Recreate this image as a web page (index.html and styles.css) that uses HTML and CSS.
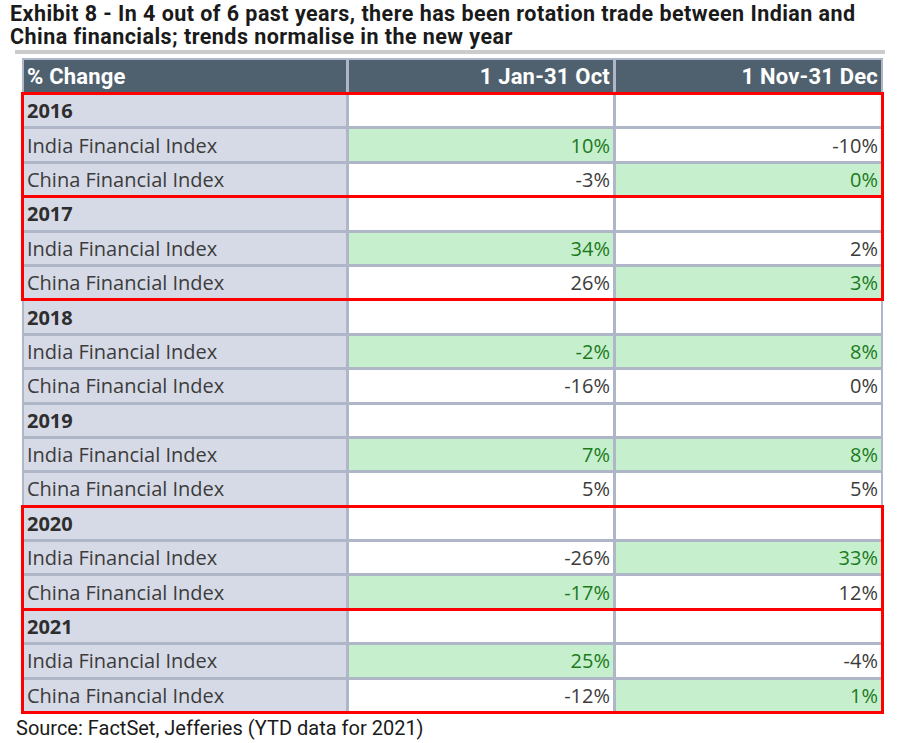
FILE: index.html
```html
<!DOCTYPE html>
<html>
<head>
<meta charset="utf-8">
<link rel="stylesheet" href="styles.css">
</head>
<body>
<div class="page">
  <h1 class="title"><span class="tl">Exhibit 8 - In 4 out of 6 past years, there has been rotation trade between Indian and</span><span class="tl">China financials; trends normalise in the new year</span></h1>
  <div class="rule"></div>
  <div class="table">
    <div class="row head">
      <div class="c lab">% Change</div>
      <div class="c num">1 Jan-31 Oct</div>
      <div class="c num">1 Nov-31 Dec</div>
    </div>
    <div class="group hl">
      <div class="row"><div class="c lab year">2016</div><div class="c"></div><div class="c"></div></div>
      <div class="row"><div class="c lab">India Financial Index</div><div class="c num g">10%</div><div class="c num">-10%</div></div>
      <div class="row"><div class="c lab">China Financial Index</div><div class="c num">-3%</div><div class="c num g">0%</div></div>
    </div>
    <div class="group hl">
      <div class="row"><div class="c lab year">2017</div><div class="c"></div><div class="c"></div></div>
      <div class="row"><div class="c lab">India Financial Index</div><div class="c num g">34%</div><div class="c num">2%</div></div>
      <div class="row"><div class="c lab">China Financial Index</div><div class="c num">26%</div><div class="c num g">3%</div></div>
    </div>
    <div class="group">
      <div class="row"><div class="c lab year">2018</div><div class="c"></div><div class="c"></div></div>
      <div class="row"><div class="c lab">India Financial Index</div><div class="c num g">-2%</div><div class="c num g">8%</div></div>
      <div class="row"><div class="c lab">China Financial Index</div><div class="c num">-16%</div><div class="c num">0%</div></div>
    </div>
    <div class="group">
      <div class="row"><div class="c lab year">2019</div><div class="c"></div><div class="c"></div></div>
      <div class="row"><div class="c lab">India Financial Index</div><div class="c num g">7%</div><div class="c num g">8%</div></div>
      <div class="row"><div class="c lab">China Financial Index</div><div class="c num">5%</div><div class="c num">5%</div></div>
    </div>
    <div class="group hl">
      <div class="row"><div class="c lab year">2020</div><div class="c"></div><div class="c"></div></div>
      <div class="row"><div class="c lab">India Financial Index</div><div class="c num">-26%</div><div class="c num g">33%</div></div>
      <div class="row"><div class="c lab">China Financial Index</div><div class="c num g">-17%</div><div class="c num">12%</div></div>
    </div>
    <div class="group hl">
      <div class="row"><div class="c lab year">2021</div><div class="c"></div><div class="c"></div></div>
      <div class="row"><div class="c lab">India Financial Index</div><div class="c num g">25%</div><div class="c num">-4%</div></div>
      <div class="row"><div class="c lab">China Financial Index</div><div class="c num">-12%</div><div class="c num g">1%</div></div>
    </div>
  </div>
  <p class="source">Source: FactSet, Jefferies (YTD data for 2021)</p>
</div>
</body>
</html>
```

FILE: styles.css
```css
html, body {
  margin: 0;
  padding: 0;
  background: #ffffff;
}
.page {
  padding: 2px 0 0 10px;
  width: 880px;
}
.title {
  margin: 0;
  display: flex;
  flex-direction: column;
  font-family: "Roboto", sans-serif;
  font-weight: bold;
  font-size: 21.5px;
  letter-spacing: 0.45px;
  line-height: 23px;
  color: #1a1a1a;
  white-space: nowrap;
}
.tl {
  display: block;
  height: 23px;
}
.rule {
  margin: 2px 0 0 5px;
  width: 870px;
  height: 4px;
  background: #cbcbcb;
}
.table {
  margin: 4px 0 0 12px;
  width: 857px;
  padding: 2px;
  background: #aeb6c7;
  display: flex;
  flex-direction: column;
  gap: 3px;
}
.group {
  display: flex;
  flex-direction: column;
  gap: 3px;
}
.group.hl {
  outline: 3px solid #ff0000;
}
.row {
  display: grid;
  grid-template-columns: 322px 264px 265px;
  column-gap: 3px;
  height: 31.4px;
}
.c {
  background: #ffffff;
  font-family: "Open Sans", "Noto Sans", sans-serif;
  font-size: 20px;
  color: #3c3c3c;
  display: flex;
  align-items: center;
  overflow: hidden;
  white-space: nowrap;
}
.c.lab {
  background: #d6dae6;
  padding-left: 3px;
}
.c.num {
  justify-content: flex-end;
  padding-right: 3px;
}
.c.g {
  background: #c6efce;
  color: #1c7a1c;
}
.c.year {
  font-weight: bold;
  color: #2e2e2e;
}
.row.head {
  height: 32px;
}
.row.head .c {
  background: #4f616f;
  color: #ffffff;
  font-family: "Roboto", sans-serif;
  font-weight: bold;
  font-size: 22px;
  letter-spacing: 0.2px;
}
.source {
  margin: 3px 0 0 6px;
  font-family: "Roboto", sans-serif;
  font-size: 20px;
  line-height: 24px;
  color: #1a1a1a;
}
```
